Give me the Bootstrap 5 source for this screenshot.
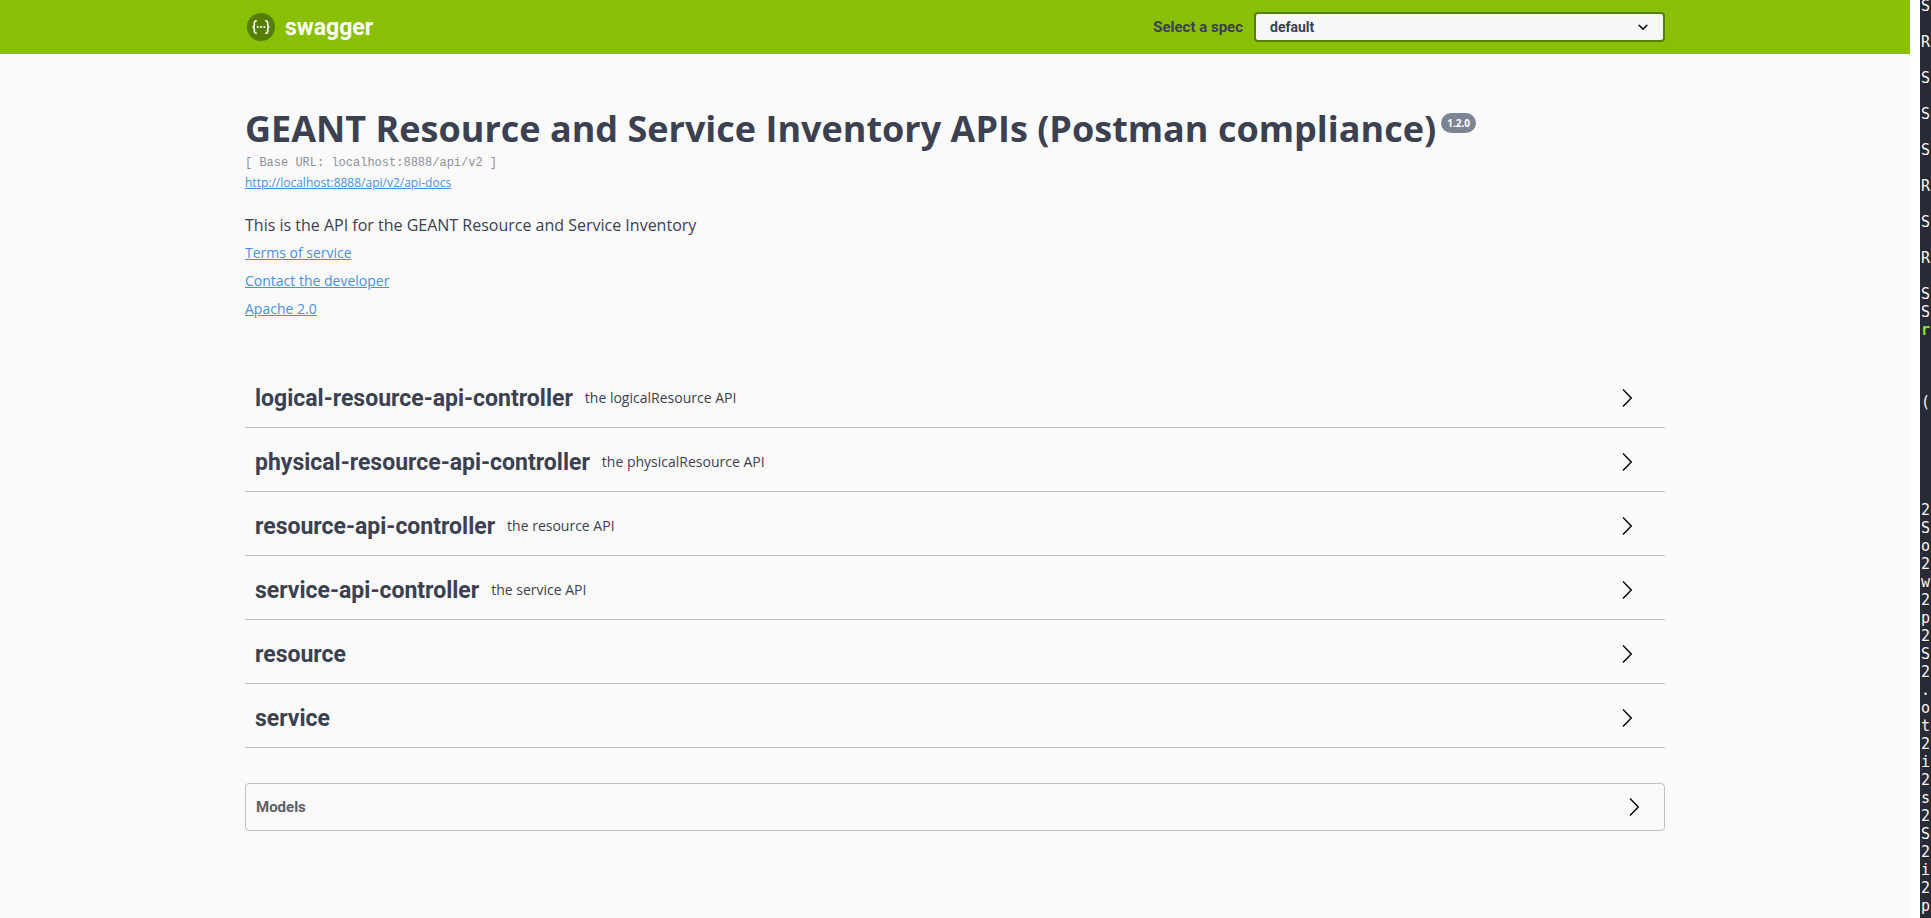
<!DOCTYPE html>
<html lang="en">
<head>
<meta charset="utf-8">
<meta name="viewport" content="width=device-width, initial-scale=1">
<title>Swagger UI</title>
<link href="https://cdn.jsdelivr.net/npm/bootstrap@5.3.0/dist/css/bootstrap.min.css" rel="stylesheet">
<style>
  body { font-family: "Open Sans", "Noto Sans", sans-serif; color: #3b4151; background: #fff; }
  .heading-font { font-family: Roboto, "Open Sans", sans-serif; font-weight: 700; color: #3b4151; }
  .docs-page { background: #fafafa; min-width: 0; }
  .wrapper { max-width: 1460px; padding: 0 20px; }
  .topbar { background: #89bf04; height: 54px; padding: 0; }
  .brand-text { font-size: 23px; line-height: 28px; padding-top: 2px; color: #fff; }
  .spec-form { gap: 11px; }
  .spec-label { font-size: 15px; line-height: 20px; }
  .spec-select { width: 411px; max-width: 100%; height: 30px; border: 2px solid #547f00; border-radius: 4px;
    padding: 0 40px 0 14px; font-size: 14px; line-height: 26px; background-color: #f7f7f7;
    background-image: url("data:image/svg+xml,%3Csvg xmlns='http://www.w3.org/2000/svg' viewBox='0 0 20 20'%3E%3Cpath d='M13.418 7.859a.695.695 0 0 1 .978 0 .68.68 0 0 1 0 .969l-3.908 3.83a.697.697 0 0 1-.979 0l-3.908-3.83a.68.68 0 0 1 0-.969.695.695 0 0 1 .978 0L10 11l3.418-3.141z'/%3E%3C/svg%3E");
    background-size: 20px; background-position: right 10px center; }
  .info { padding: 51px 0 45px; }
  .info h1 { font-size: 36px; line-height: 48px; font-weight: 700; }
  .version { background: #7d8492; color: #fff; font-size: 10px; line-height: 16px; font-weight: 700; padding: 2px 6px; border-radius: 10px; margin: 8px 0 0 5px; }
  .base-url { font-family: "Liberation Mono", monospace; font-size: 12px; line-height: 20px; color: #8d9099; }
  .info a { color: #4990e2; }
  .docs-link { font-size: 12px; line-height: 20px; }
  .about { font-size: 16px; line-height: 24px; margin: 20px 0 6px; }
  .meta-links { font-size: 14px; line-height: 20px; }
  .tag-row { height: 64px; padding: 14px 31px 10px 10px; border: 0; border-bottom: 1px solid #bfc0c4; background: none; text-align: left; }
  .tag-name { font-size: 23px; line-height: 28px; padding-top: 3px; }
  .tag-note { font-size: 14px; line-height: 20px; color: #3b4151; }
  .models { height: 48px; margin-top: 35px; padding: 0 23px 0 10px; border: 1px solid #bfc0c6; border-radius: 4px; background: none; }
  .models-title { font-size: 15px; line-height: 20px; color: #606060; }
  .terminal { width: 11px; margin-left: 10px; background: #282a36; }
  .terminal pre { font: 15px/18px "DejaVu Sans Mono", monospace; color: #f8f8f2; margin: -3px 0 0 1px; overflow: hidden; }
  .prompt { color: #8ae234; font-weight: 700; }
</style>
</head>
<body>
<div class="d-flex vh-100 overflow-hidden">
  <div class="docs-page flex-grow-1 overflow-hidden">
    <header class="navbar topbar">
      <div class="wrapper container-fluid">
        <a href="#" class="d-flex align-items-center text-decoration-none gap-2">
          <svg width="32" height="30" viewBox="-3 0 32 30" aria-hidden="true">
            <circle cx="13" cy="15" r="14" fill="#547f00"/>
            <g fill="none" stroke="#fff" stroke-width="1.6">
              <path d="M8.800 8.700c-2 0-2.500.6-2.500 2.100v2.100c0 1.400-.4 2-1.700 2.100 1.300.1 1.700.7 1.700 2.100v2.100c0 1.500.5 2.100 2.500 2.100"/>
              <path d="M17.200 8.700c2 0 2.500.6 2.500 2.100v2.100c0 1.400.4 2 1.700 2.100-1.300.1-1.700.7-1.700 2.100v2.100c0 1.500-.5 2.100-2.500 2.100"/>
            </g>
            <g fill="#fff"><circle cx="9.700" cy="15" r="1.100"/><circle cx="13" cy="15" r="1.100"/><circle cx="16.300" cy="15" r="1.100"/></g>
          </svg>
          <span class="heading-font brand-text">swagger</span>
        </a>
        <form class="d-flex align-items-center spec-form">
          <label class="heading-font spec-label" for="spec">Select a spec</label>
          <select id="spec" class="form-select heading-font spec-select"><option>default</option></select>
        </form>
      </div>
    </header>
    <main class="wrapper container-fluid">
      <section class="info">
        <div class="d-flex align-items-start">
          <h1 class="m-0">GEANT Resource and Service Inventory APIs (Postman compliance)</h1>
          <span class="version">1.2.0</span>
        </div>
        <div class="base-url">[ Base URL: localhost:8888/api/v2 ]</div>
        <a class="docs-link d-block" href="#">http://localhost:8888/api/v2/api-docs</a>
        <p class="about">This is the API for the GEANT Resource and Service Inventory</p>
        <div class="meta-links d-flex flex-column align-items-start gap-2">
          <a href="#">Terms of service</a>
          <a href="#">Contact the developer</a>
          <a href="#">Apache 2.0</a>
        </div>
      </section>
      <section id="tags">
        <button type="button" class="tag-row d-flex align-items-center w-100"><span class="heading-font tag-name">logical-resource-api-controller</span><span class="tag-note ps-2 ms-1">the logicalResource API</span><svg class="ms-auto" width="12" height="18" viewBox="0 0 12 18"><path d="M1 .5 9.300 9 1 17.500" fill="none" stroke="#000" stroke-width="1.400"/></svg></button>
        <button type="button" class="tag-row d-flex align-items-center w-100"><span class="heading-font tag-name">physical-resource-api-controller</span><span class="tag-note ps-2 ms-1">the physicalResource API</span><svg class="ms-auto" width="12" height="18" viewBox="0 0 12 18"><path d="M1 .5 9.300 9 1 17.500" fill="none" stroke="#000" stroke-width="1.400"/></svg></button>
        <button type="button" class="tag-row d-flex align-items-center w-100"><span class="heading-font tag-name">resource-api-controller</span><span class="tag-note ps-2 ms-1">the resource API</span><svg class="ms-auto" width="12" height="18" viewBox="0 0 12 18"><path d="M1 .5 9.300 9 1 17.500" fill="none" stroke="#000" stroke-width="1.400"/></svg></button>
        <button type="button" class="tag-row d-flex align-items-center w-100"><span class="heading-font tag-name">service-api-controller</span><span class="tag-note ps-2 ms-1">the service API</span><svg class="ms-auto" width="12" height="18" viewBox="0 0 12 18"><path d="M1 .5 9.300 9 1 17.500" fill="none" stroke="#000" stroke-width="1.400"/></svg></button>
        <button type="button" class="tag-row d-flex align-items-center w-100"><span class="heading-font tag-name">resource</span><svg class="ms-auto" width="12" height="18" viewBox="0 0 12 18"><path d="M1 .5 9.300 9 1 17.500" fill="none" stroke="#000" stroke-width="1.400"/></svg></button>
        <button type="button" class="tag-row d-flex align-items-center w-100"><span class="heading-font tag-name">service</span><svg class="ms-auto" width="12" height="18" viewBox="0 0 12 18"><path d="M1 .5 9.300 9 1 17.500" fill="none" stroke="#000" stroke-width="1.400"/></svg></button>
      </section>
      <button type="button" class="models d-flex align-items-center justify-content-between w-100"><span class="heading-font models-title">Models</span><svg width="12" height="18" viewBox="0 0 12 18"><path d="M1 .5 9.300 9 1 17.500" fill="none" stroke="#000" stroke-width="1.400"/></svg></button>
    </main>
  </div>
  <aside class="terminal flex-shrink-0 overflow-hidden">
<pre>S

R

S

S

S

R

S

R

S
S
<span class="prompt">r</span>



(





2
S
o
2
w
2
p
2
S
2
.
o
t
2
i
2
s
2
S
2
i
2
p</pre>
  </aside>
</div>
<script src="https://cdn.jsdelivr.net/npm/bootstrap@5.3.0/dist/js/bootstrap.bundle.min.js"></script>
</body>
</html>
